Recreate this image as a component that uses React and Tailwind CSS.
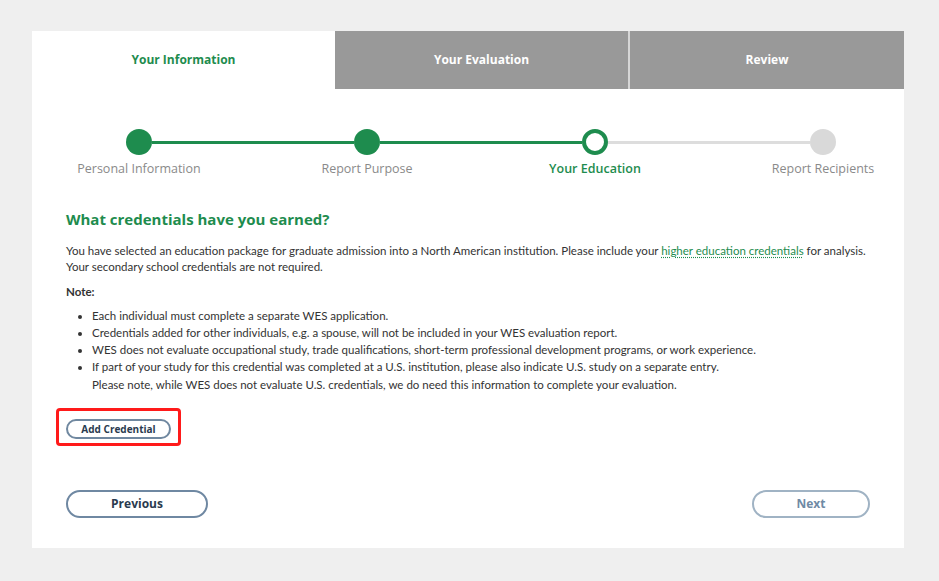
const TABS = [
  { label: 'Your Information', active: true, w: 'w-[303px]' },
  { label: 'Your Evaluation', active: false, w: 'w-[293px]' },
  { label: 'Review', active: false, w: 'flex-1' },
]

const STEPS = [
  { label: 'Personal Information', state: 'done' },
  { label: 'Report Purpose', state: 'done' },
  { label: 'Your Education', state: 'current' },
  { label: 'Report Recipients', state: 'todo' },
]

const NOTES = [
  'Each individual must complete a separate WES application.',
  'Credentials added for other individuals, e.g. a spouse, will not be included in your WES evaluation report.',
  'WES does not evaluate occupational study, trade qualifications, short-term professional development programs, or work experience.',
]

function StepDot({ state }) {
  if (state === 'done') return <span className="h-[26px] w-[26px] shrink-0 rounded-full bg-[#1e8c4e]" />
  if (state === 'current')
    return <span className="h-[26px] w-[26px] shrink-0 rounded-full border-[4px] border-[#1e8c4e] bg-white" />
  return <span className="h-[26px] w-[26px] shrink-0 rounded-full bg-[#d9d9d9]" />
}

export default function App() {
  return (
    <div className="min-h-[581px] bg-[#efefef] pt-[31px] pl-[32px]" style={{ fontFamily: '"Open Sans", sans-serif' }}>
      <div className="h-[517px] w-[872px] bg-white">
        <div className="flex h-[58px]">
          {TABS.map((t, i) => (
            <div
              key={t.label}
              className={`${t.w} flex items-center justify-center text-[12px] font-bold ${
                t.active ? 'bg-white text-[#1e8c4e]' : 'bg-[#999999] text-white'
              } ${i === 2 ? 'border-l-2 border-[#d6d6d6]' : ''}`}
            >
              {t.label}
            </div>
          ))}
        </div>

        <div className="mt-[40px] ml-[94px] flex w-[710px] items-center">
          {STEPS.map((s, i) => (
            <div key={s.label} className={`flex items-center ${i < 3 ? 'flex-1' : ''}`}>
              <StepDot state={s.state} />
              {i < 3 ? (
                <span className={`h-[3px] flex-1 ${i < 2 ? 'bg-[#1e8c4e]' : 'bg-[#dddddd]'}`} />
              ) : null}
            </div>
          ))}
        </div>
        <div className="mt-[5px] ml-[27px] flex w-[844px] justify-between">
          {STEPS.map((s) => (
            <div
              key={s.label}
              className={`w-[160px] text-center text-[12.5px] ${
                s.state === 'current' ? 'font-semibold text-[#1e8c4e]' : 'text-[#8a8a8a]'
              }`}
            >
              {s.label}
            </div>
          ))}
        </div>

        <div className="px-[34px]" style={{ fontFamily: 'Lato, sans-serif' }}>
          <h1 className="mt-[29px] text-[15px] font-bold text-[#1e8c4e]" style={{ fontFamily: '"Open Sans", sans-serif' }}>
            What credentials have you earned?
          </h1>
          <p className="mt-[13px] text-[11.5px] leading-[16px] text-[#333]">
            You have selected an education package for graduate admission into a North American institution. Please
            include your{' '}
            <a className="text-[#1e8c4e] underline decoration-dotted underline-offset-2">higher education credentials</a>{' '}
            for analysis.
            <br />
            Your secondary school credentials are not required.
          </p>
          <p className="mt-[8px] text-[11.5px] font-bold text-[#333]">Note:</p>
          <ul className="mt-[6px] list-disc pl-[26px] text-[11.5px] leading-[17.3px] text-[#333]">
            {NOTES.map((n) => (
              <li key={n}>{n}</li>
            ))}
            <li>
              If part of your study for this credential was completed at a U.S. institution, please also indicate U.S.
              study on a separate entry.
              <br />
              Please note, while WES does not evaluate U.S. credentials, we do need this information to complete your
              evaluation.
            </li>
          </ul>

          <div className="mt-[15px] ml-[-10px] inline-block rounded-[4px] border-[3px] border-[#ff1a1a] px-[7px] py-[4px]">
            <button
              type="button"
              className="h-[20px] w-[105px] rounded-full border-2 border-[#7088a0] text-[10px] font-bold text-[#2a3b4f]"
              style={{ fontFamily: '"Open Sans", sans-serif' }}
            >
              Add Credential
            </button>
          </div>

          <div className="mt-[44px] flex justify-between" style={{ fontFamily: '"Open Sans", sans-serif' }}>
            <button
              type="button"
              className="h-[28px] w-[142px] rounded-full border-2 border-[#6f88a2] text-[12px] font-bold text-[#2a3b4f]"
            >
              Previous
            </button>
            <button
              type="button"
              className="h-[28px] w-[118px] rounded-full border-2 border-[#a0b3c4] text-[12px] font-bold text-[#6f8aa5]"
            >
              Next
            </button>
          </div>
        </div>
      </div>
    </div>
  )
}
